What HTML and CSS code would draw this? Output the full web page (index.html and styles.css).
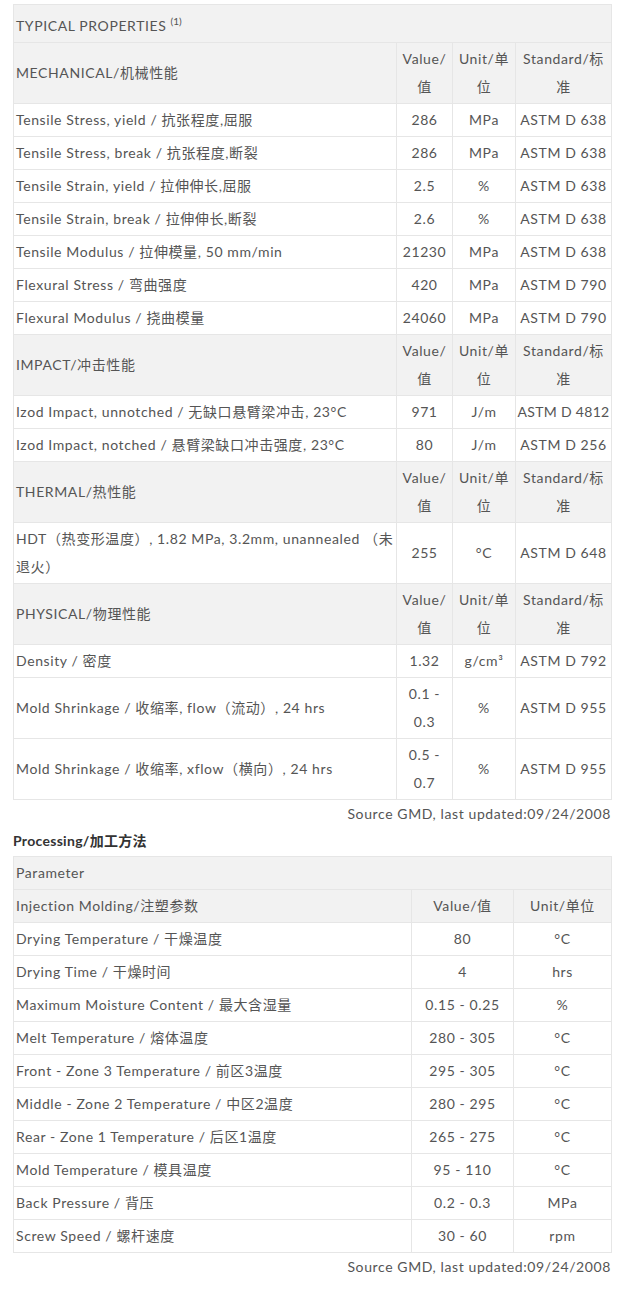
FILE: index.html
```html
<!DOCTYPE html>
<html lang="zh">
<head>
<meta charset="utf-8">
<link rel="stylesheet" href="styles.css">
</head>
<body>
<div class="page">
  <table class="props">
    <colgroup>
      <col class="c-name"><col class="c-val"><col class="c-unit"><col class="c-std">
    </colgroup>
    <tr class="head top"><td colspan="4">TYPICAL PROPERTIES <sup>(1)</sup></td></tr>
    <tr class="head"><td>MECHANICAL/机械性能</td><td class="ctr">Value/值</td><td class="ctr">Unit/单位</td><td class="ctr">Standard/标准</td></tr>
    <tr><td>Tensile Stress, yield / 抗张程度,屈服</td><td class="ctr">286</td><td class="ctr">MPa</td><td class="ctr nw">ASTM D 638</td></tr>
    <tr><td>Tensile Stress, break / 抗张程度,断裂</td><td class="ctr">286</td><td class="ctr">MPa</td><td class="ctr nw">ASTM D 638</td></tr>
    <tr><td>Tensile Strain, yield / 拉伸伸长,屈服</td><td class="ctr">2.5</td><td class="ctr">%</td><td class="ctr nw">ASTM D 638</td></tr>
    <tr><td>Tensile Strain, break / 拉伸伸长,断裂</td><td class="ctr">2.6</td><td class="ctr">%</td><td class="ctr nw">ASTM D 638</td></tr>
    <tr><td>Tensile Modulus / 拉伸模量, 50 mm/min</td><td class="ctr">21230</td><td class="ctr">MPa</td><td class="ctr nw">ASTM D 638</td></tr>
    <tr><td>Flexural Stress / 弯曲强度</td><td class="ctr">420</td><td class="ctr">MPa</td><td class="ctr nw">ASTM D 790</td></tr>
    <tr><td>Flexural Modulus / 挠曲模量</td><td class="ctr">24060</td><td class="ctr">MPa</td><td class="ctr nw">ASTM D 790</td></tr>
    <tr class="head"><td>IMPACT/冲击性能</td><td class="ctr">Value/值</td><td class="ctr">Unit/单位</td><td class="ctr">Standard/标准</td></tr>
    <tr><td>Izod Impact, unnotched / 无缺口悬臂梁冲击, 23°C</td><td class="ctr">971</td><td class="ctr">J/m</td><td class="ctr nw tight">ASTM D 4812</td></tr>
    <tr><td>Izod Impact, notched / 悬臂梁缺口冲击强度, 23°C</td><td class="ctr">80</td><td class="ctr">J/m</td><td class="ctr nw">ASTM D 256</td></tr>
    <tr class="head"><td>THERMAL/热性能</td><td class="ctr">Value/值</td><td class="ctr">Unit/单位</td><td class="ctr">Standard/标准</td></tr>
    <tr><td>HDT（热变形温度）, 1.82 MPa, 3.2mm, unannealed （未退火）</td><td class="ctr">255</td><td class="ctr">°C</td><td class="ctr nw">ASTM D 648</td></tr>
    <tr class="head"><td>PHYSICAL/物理性能</td><td class="ctr">Value/值</td><td class="ctr">Unit/单位</td><td class="ctr">Standard/标准</td></tr>
    <tr><td>Density / 密度</td><td class="ctr">1.32</td><td class="ctr">g/cm³</td><td class="ctr nw">ASTM D 792</td></tr>
    <tr><td>Mold Shrinkage / 收缩率, flow（流动）, 24 hrs</td><td class="ctr">0.1 - 0.3</td><td class="ctr">%</td><td class="ctr nw">ASTM D 955</td></tr>
    <tr><td>Mold Shrinkage / 收缩率, xflow（横向）, 24 hrs</td><td class="ctr">0.5 - 0.7</td><td class="ctr">%</td><td class="ctr nw">ASTM D 955</td></tr>
  </table>
  <p class="source">Source GMD, last updated:09/24/2008</p>

  <h3 class="section">Processing/加工方法</h3>
  <table class="proc">
    <colgroup>
      <col class="p-name"><col class="p-val"><col class="p-unit">
    </colgroup>
    <tr class="head"><td colspan="3">Parameter</td></tr>
    <tr class="head"><td>Injection Molding/注塑参数</td><td class="ctr">Value/值</td><td class="ctr">Unit/单位</td></tr>
    <tr><td>Drying Temperature / 干燥温度</td><td class="ctr">80</td><td class="ctr">°C</td></tr>
    <tr><td>Drying Time / 干燥时间</td><td class="ctr">4</td><td class="ctr">hrs</td></tr>
    <tr><td>Maximum Moisture Content / 最大含湿量</td><td class="ctr">0.15 - 0.25</td><td class="ctr">%</td></tr>
    <tr><td>Melt Temperature / 熔体温度</td><td class="ctr">280 - 305</td><td class="ctr">°C</td></tr>
    <tr><td>Front - Zone 3 Temperature / 前区3温度</td><td class="ctr">295 - 305</td><td class="ctr">°C</td></tr>
    <tr><td>Middle - Zone 2 Temperature / 中区2温度</td><td class="ctr">280 - 295</td><td class="ctr">°C</td></tr>
    <tr><td>Rear - Zone 1 Temperature / 后区1温度</td><td class="ctr">265 - 275</td><td class="ctr">°C</td></tr>
    <tr><td>Mold Temperature / 模具温度</td><td class="ctr">95 - 110</td><td class="ctr">°C</td></tr>
    <tr><td>Back Pressure / 背压</td><td class="ctr">0.2 - 0.3</td><td class="ctr">MPa</td></tr>
    <tr><td>Screw Speed / 螺杆速度</td><td class="ctr">30 - 60</td><td class="ctr">rpm</td></tr>
  </table>
  <p class="source">Source GMD, last updated:09/24/2008</p>
</div>
</body>
</html>
```

FILE: styles.css
```css
html, body {
  margin: 0;
  padding: 0;
  background: #fff;
}
body {
  font-family: Lato, "Noto Sans CJK SC", sans-serif;
  font-size: 14px;
  line-height: 28px;
  letter-spacing: 0.6px;
  color: #555;
}
.page {
  padding: 4px 11px 0 13px;
  width: 598px;
}
table {
  width: 598px;
  border-collapse: collapse;
  table-layout: fixed;
  border: 1px solid #333;
}
td {
  border: 1px solid #e6e6e6;
  padding: 2px 2px;
  vertical-align: middle;
  text-align: left;
}
.ctr {
  text-align: center;
  padding: 2px 2px;
}
.nw {
  white-space: nowrap;
  padding: 2px 0;
}
.tight {
  letter-spacing: 0.3px;
}
.head td {
  background: #f2f2f2;
}
.top td {
  padding: 7px 2px 2px 2px;
}
sup {
  font-size: 10px;
  line-height: 0;
  letter-spacing: 0;
}
.c-name { width: 383px; }
.c-val { width: 56px; }
.c-unit { width: 63px; }
.c-std { width: 96px; }
.p-name { width: 398px; }
.p-val { width: 102px; }
.p-unit { width: 98px; }
.source {
  margin: 0;
  text-align: right;
  line-height: 27px;
}
.section {
  margin: 0 0 2px 0;
  font-size: 14px;
  font-weight: bold;
  line-height: 27px;
  color: #333;
  letter-spacing: 0.3px;
}
```
